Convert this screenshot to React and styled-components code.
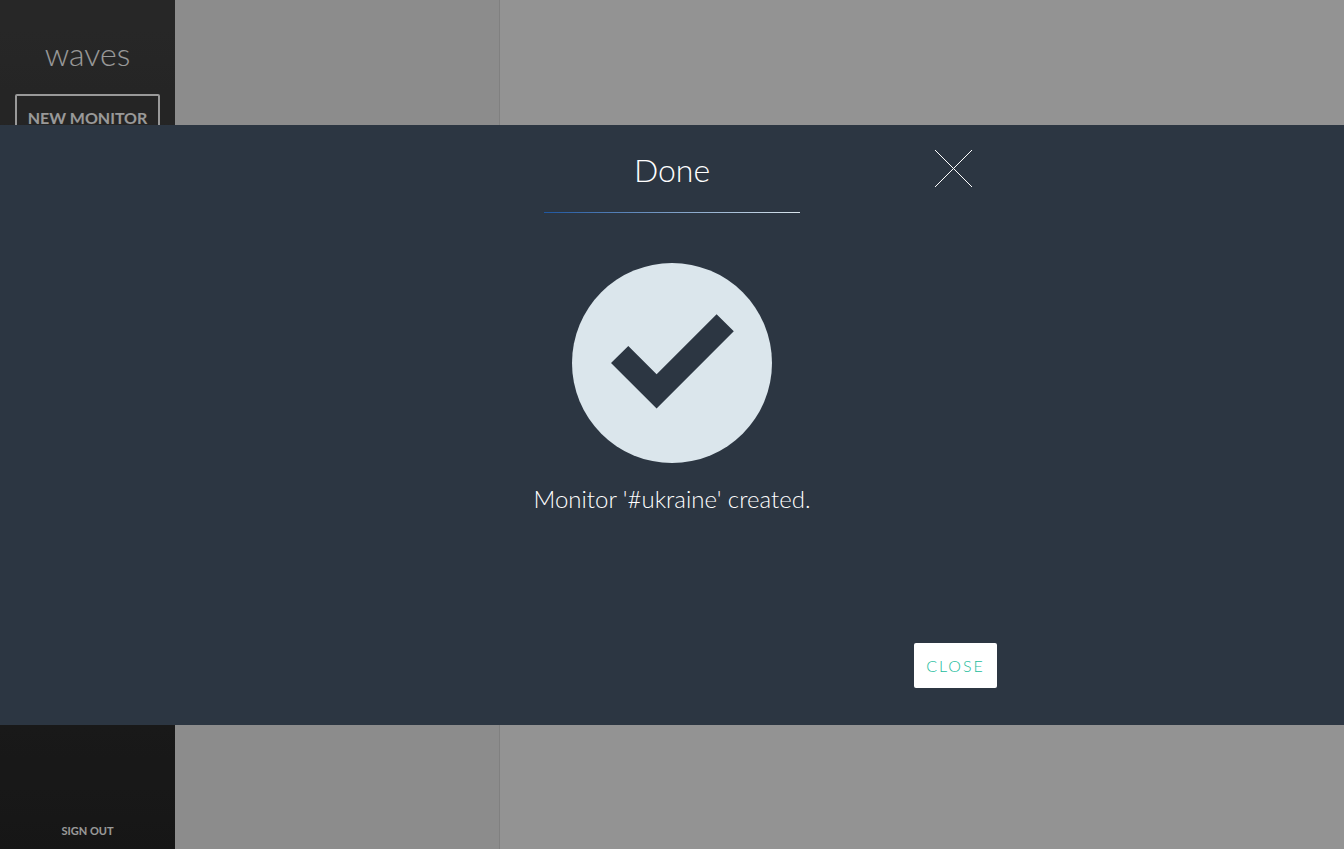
import React from "react";
import styled, { createGlobalStyle } from "styled-components";

const GlobalStyle = createGlobalStyle`
  *, *::before, *::after { box-sizing: border-box; }
  body { margin: 0; font-family: Lato, "Liberation Sans", sans-serif; }
  button { font-family: inherit; cursor: pointer; }
  h1, h2, p { margin: 0; }
`;

const Page = styled.div`
  display: flex;
  min-height: 100vh;
  background: #f5f5f5;
`;

const Sidebar = styled.aside`
  display: flex;
  flex-direction: column;
  width: 175px;
  padding: 34px 15px 8px;
  background: linear-gradient(#424242, #262626);
  color: #fff;
`;

const Brand = styled.h1`
  margin-bottom: 20px;
  font-size: 32px;
  line-height: 40px;
  font-weight: 300;
  text-align: center;
`;

const NewMonitorButton = styled.button`
  height: 46px;
  padding: 0;
  border: 2px solid #fff;
  border-radius: 2px;
  background: none;
  color: inherit;
  font-size: 16px;
  font-weight: 700;
  white-space: nowrap;
`;

const SignOutButton = styled.button`
  margin-top: auto;
  padding: 0;
  border: 0;
  background: none;
  color: inherit;
  font-size: 11px;
  line-height: 20px;
  font-weight: 700;
`;

const MonitorList = styled.section`
  width: 325px;
  border-right: 1px solid #d5d5d5;
  background: #eaeaea;
`;

const Content = styled.main`
  flex: 1;
`;

const Backdrop = styled.div`
  position: fixed;
  inset: 0;
  display: flex;
  flex-direction: column;
  justify-content: center;
  background: rgba(0, 0, 0, 0.4);
`;

const Dialog = styled.div`
  min-height: 600px;
  display: flex;
  justify-content: center;
  background: #2c3642;
  color: #fff;
`;

const DialogBody = styled.div`
  display: flex;
  flex-direction: column;
  width: 100%;
  max-width: 650px;
  padding-bottom: 37px;
`;

const DialogHeader = styled.header`
  display: grid;
  grid-template-columns: 1fr 256px 1fr;
  align-items: start;
  padding-top: 25px;
`;

const Title = styled.h2`
  grid-column: 2;
  height: 63px;
  border-bottom: 1px solid;
  border-image: linear-gradient(90deg, #1e56a0, #dbe6ec) 1;
  font-size: 32px;
  line-height: 40px;
  font-weight: 300;
  text-align: center;
`;

const DismissButton = styled.button`
  justify-self: end;
  width: 37px;
  height: 37px;
  margin-right: 25px;
  padding: 0;
  border: 0;
  background: none;
  color: #fff;

  svg { display: block; }
`;

const Result = styled.div`
  display: flex;
  flex-direction: column;
  align-items: center;
  gap: 20px;
  padding-top: 50px;
`;

const Message = styled.p`
  font-size: 24px;
  line-height: 32px;
  font-weight: 300;
`;

const CloseButton = styled.button`
  align-self: flex-end;
  width: 83px;
  height: 45px;
  margin-top: auto;
  padding: 0;
  border: 0;
  border-radius: 2px;
  background: #fff;
  color: #1abc9c;
  font-size: 16px;
  font-weight: 300;
  letter-spacing: 2px;
`;

function CrossIcon() {
  return (
    <svg width="37" height="37" viewBox="0 0 37 37" stroke="currentColor" shapeRendering="crispEdges" aria-hidden="true">
      <path d="M0 0L37 37M37 0L0 37" />
    </svg>
  );
}

function CheckIcon() {
  return (
    <svg width="200" height="200" viewBox="0 0 200 200" aria-hidden="true">
      <circle cx="100" cy="100" r="100" fill="#dbe6ec" />
      <path d="M39 100L56.3 83L84.6 111.2L144.6 51.2L161.8 68.3L84.6 145.6Z" fill="#2c3642" />
    </svg>
  );
}

export default function App() {
  return (
    <>
      <GlobalStyle />
      <Page>
        <Sidebar>
          <Brand>waves</Brand>
          <NewMonitorButton type="button">NEW MONITOR</NewMonitorButton>
          <SignOutButton type="button">SIGN OUT</SignOutButton>
        </Sidebar>
        <MonitorList />
        <Content />
      </Page>
      <Backdrop>
        <Dialog role="dialog" aria-modal="true" aria-labelledby="dialog-title">
          <DialogBody>
            <DialogHeader>
              <Title id="dialog-title">Done</Title>
              <DismissButton type="button" aria-label="Dismiss">
                <CrossIcon />
              </DismissButton>
            </DialogHeader>
            <Result>
              <CheckIcon />
              <Message>Monitor '#ukraine' created.</Message>
            </Result>
            <CloseButton type="button">CLOSE</CloseButton>
          </DialogBody>
        </Dialog>
      </Backdrop>
    </>
  );
}
